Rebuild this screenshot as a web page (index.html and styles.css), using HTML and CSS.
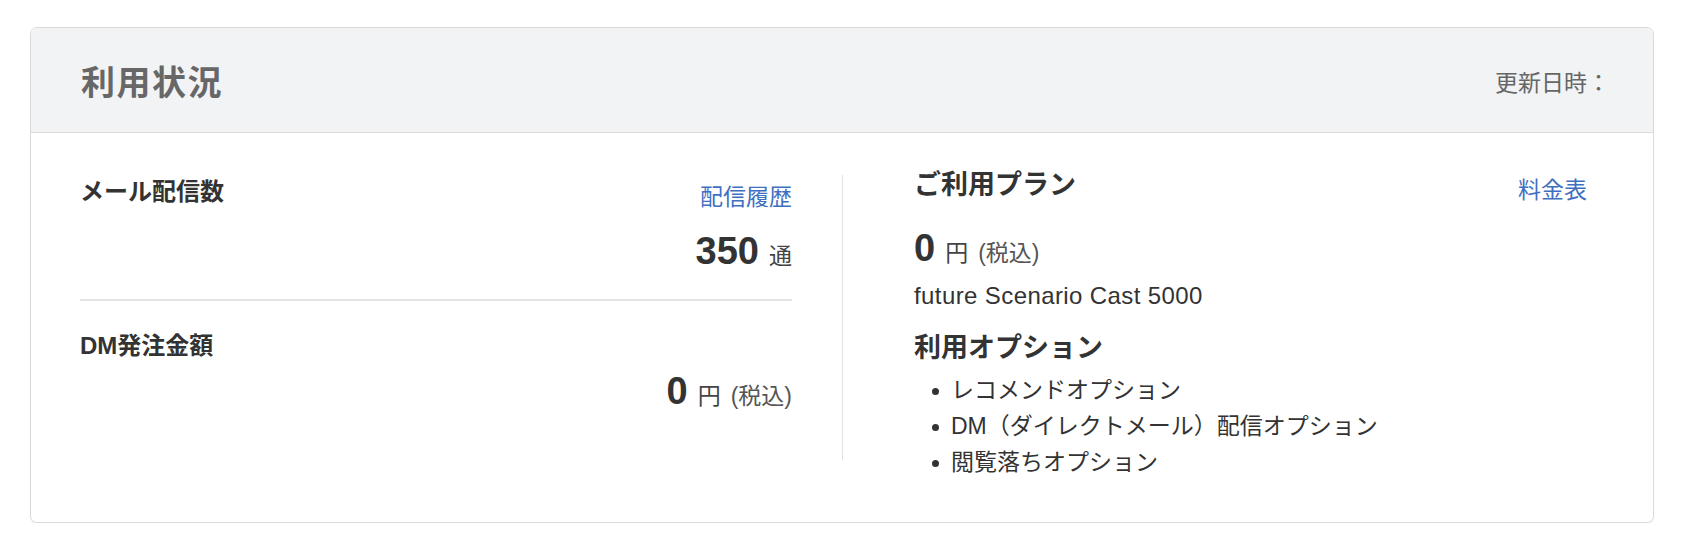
FILE: index.html
```html
<!DOCTYPE html>
<html lang="ja">
<head>
<meta charset="utf-8">
<title>利用状況</title>
<link rel="stylesheet" href="styles.css">
</head>
<body>
<div class="page">
  <div class="card">
    <div class="card-header">
      <h2 class="title">利用状況</h2>
      <span class="updated">更新日時：</span>
    </div>
    <div class="card-body">
      <div class="col-left">
        <section class="stat">
          <div class="stat-head">
            <h3 class="label">メール配信数</h3>
            <a class="link link-history" href="#">配信履歴</a>
          </div>
          <div class="value value-mail"><span class="num">350</span><span class="unit">通</span></div>
        </section>
        <div class="sep"></div>
        <section class="stat">
          <div class="stat-head">
            <h3 class="label">DM発注金額</h3>
          </div>
          <div class="value value-dm"><span class="num">0</span><span class="unit">円</span><span class="tax">(税込)</span></div>
        </section>
      </div>
      <div class="vline"></div>
      <div class="col-right">
        <div class="plan-head">
          <h3 class="heading">ご利用プラン</h3>
          <a class="link link-price" href="#">料金表</a>
        </div>
        <div class="value value-plan"><span class="num">0</span><span class="unit">円</span><span class="tax">(税込)</span></div>
        <p class="plan-name">future Scenario Cast 5000</p>
        <h3 class="heading heading-options">利用オプション</h3>
        <ul class="options">
          <li>レコメンドオプション</li>
          <li>DM（ダイレクトメール）配信オプション</li>
          <li>閲覧落ちオプション</li>
        </ul>
      </div>
    </div>
  </div>
</div>
</body>
</html>
```
FILE: styles.css
```css
html, body {
  margin: 0;
  padding: 0;
  background: #ffffff;
}

body {
  font-family: "Liberation Sans", "Noto Sans CJK JP", sans-serif;
  color: #333333;
}

.page {
  padding: 27px 29px 0 30px;
}

.card {
  border: 1px solid #dadada;
  border-radius: 7px;
  box-shadow: 0 1px 1px rgba(0, 0, 0, 0.08);
  overflow: hidden;
  height: 496px;
  box-sizing: border-box;
}

.card-header {
  height: 104px;
  background: #f2f3f5;
  border-bottom: 1px solid #dcdcdc;
  display: flex;
  align-items: center;
  justify-content: space-between;
  padding: 0 43px 0 50px;
}

.title {
  margin: 0;
  font-size: 34px;
  font-weight: 700;
  color: #676767;
  line-height: 40px;
  letter-spacing: 1.5px;
  font-family: "Noto Sans CJK JP", sans-serif;
  padding-top: 1px;
}

.updated {
  font-size: 23px;
  color: #666666;
  font-family: "Noto Sans CJK JP", sans-serif;
  line-height: 32px;
  padding-top: 2px;
}

.card-body {
  display: flex;
  align-items: flex-start;
  padding: 33px 66px 0 49px;
}

.col-left {
  width: 712px;
  margin-top: 10px;
  flex: none;
}

.stat-head {
  display: flex;
  justify-content: space-between;
  align-items: flex-start;
}

.label {
  margin: 0;
  font-size: 24px;
  line-height: 32px;
  font-weight: 700;
  color: #333333;
}

.link {
  font-size: 23px;
  line-height: 32px;
  color: #3f6fc0;
  text-decoration: none;
}

.link-history {
  margin-top: 5px;
}

.link-price {
  margin-top: 6px;
}

.value {
  display: flex;
  align-items: baseline;
  justify-content: flex-end;
}

.num {
  font-size: 38px;
  line-height: 38px;
  font-weight: 700;
  color: #333333;
}

.unit {
  font-size: 23px;
  line-height: 30px;
  color: #444444;
  margin-left: 10px;
}

.tax {
  font-size: 23px;
  line-height: 30px;
  color: #555555;
  margin-left: 10px;
}

.value-mail {
  margin-top: 19px;
}

.sep {
  height: 2px;
  background: #e3e3e3;
  margin: 28px 0 29px;
}

.value-dm {
  margin-top: 10px;
}

.vline {
  flex: none;
  width: 1px;
  height: 285px;
  margin: 9px 0 0 50px;
  background: #e2e2e2;
}

.col-right {
  flex: 1;
  padding-left: 71px;
  margin-top: 2px;
}

.plan-head {
  display: flex;
  justify-content: space-between;
  align-items: flex-start;
}

.heading {
  margin: 0;
  font-size: 27px;
  line-height: 34px;
  font-weight: 700;
  color: #333333;
}

.value-plan {
  justify-content: flex-start;
  margin-top: 23px;
}

.plan-name {
  margin: 13px 0 0;
  font-size: 24px;
  line-height: 30px;
  letter-spacing: 0.4px;
  color: #333333;
}

.heading-options {
  margin-top: 20px;
}

.options {
  list-style: none;
  margin: 7px 0 0;
  padding: 0;
}

.options li {
  display: flex;
  align-items: center;
  font-size: 23px;
  line-height: 36px;
  color: #333333;
}

.options li::before {
  content: "";
  width: 7px;
  height: 7px;
  border-radius: 50%;
  background: #333333;
  margin: 2px 12px 0 18px;
  flex: none;
}
```
